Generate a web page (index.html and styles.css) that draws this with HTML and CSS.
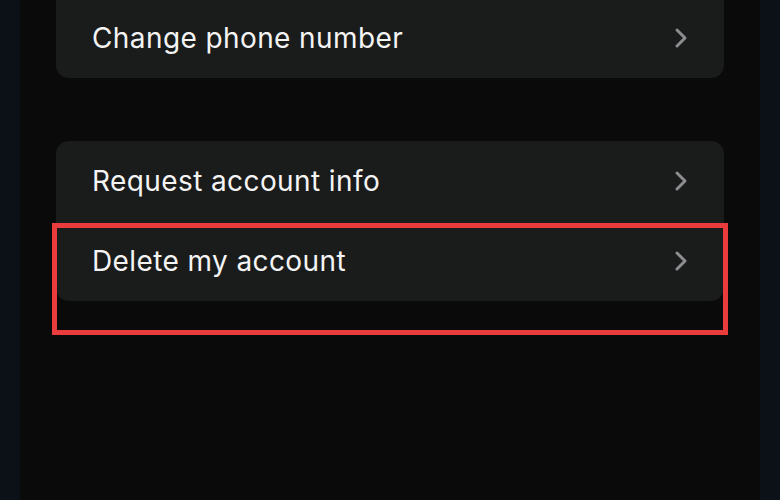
FILE: index.html
```html
<!DOCTYPE html>
<html lang="en">
<head>
<meta charset="utf-8">
<link rel="stylesheet" href="styles.css">
</head>
<body>
<div class="screen">
  <div class="card card-top">
    <div class="row">
      <span class="label">Change phone number</span>
      <svg class="chev" viewBox="0 0 14 22" width="14" height="22"><path d="M3 3 L11 11 L3 19" /></svg>
    </div>
  </div>
  <div class="card card-second">
    <div class="row">
      <span class="label">Request account info</span>
      <svg class="chev" viewBox="0 0 14 22" width="14" height="22"><path d="M3 3 L11 11 L3 19" /></svg>
    </div>
    <div class="row">
      <span class="label">Delete my account</span>
      <svg class="chev" viewBox="0 0 14 22" width="14" height="22"><path d="M3 3 L11 11 L3 19" /></svg>
    </div>
  </div>
  <div class="highlight"></div>
</div>
</body>
</html>
```

FILE: styles.css
```css
html, body {
  margin: 0;
  padding: 0;
  background: #0b1116;
}
.screen {
  position: relative;
  width: 740px;
  height: 500px;
  margin: 0 20px;
  background: #0a0a0a;
  padding: 0 36px;
  box-sizing: border-box;
  overflow: hidden;
  font-family: Inter, "Noto Sans", sans-serif;
}
.card {
  background: #1a1b1b;
  border-radius: 13px;
}
.card-top {
  margin-top: -2px;
  border-top-left-radius: 0;
  border-top-right-radius: 0;
}
.card-second {
  margin-top: 63px;
}
.row {
  height: 80px;
  display: flex;
  align-items: center;
  justify-content: space-between;
  padding: 0 36px 0 36px;
}
.label {
  color: #f4f4f4;
  font-size: 28px;
  letter-spacing: 0.4px;
}
.chev {
  display: block;
}
.chev path {
  fill: none;
  stroke: #8e8e92;
  stroke-width: 3;
  stroke-linecap: round;
  stroke-linejoin: round;
}
.highlight {
  position: absolute;
  left: 32px;
  top: 223px;
  width: 676px;
  height: 112px;
  border: 5px solid #ea3b3d;
  box-sizing: border-box;
}
```
